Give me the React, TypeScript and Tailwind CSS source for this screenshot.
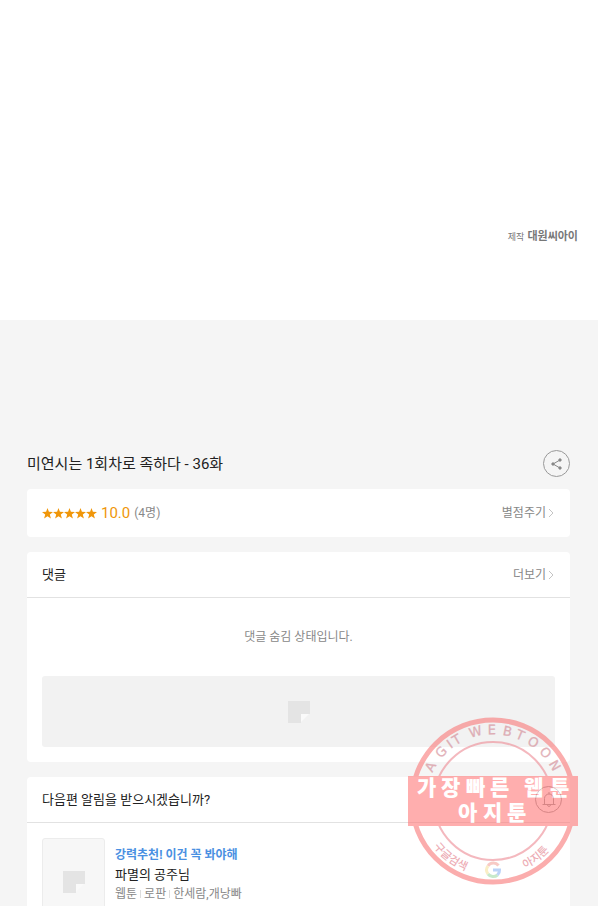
import React from "react";

const ring = (text: string, angles: number[], radius: number) => {
  const x = angles.map((a) => 85 + radius * Math.sin((a * Math.PI) / 180)).join(" ");
  const y = angles.map((a) => 85 - radius * Math.cos((a * Math.PI) / 180)).join(" ");
  return { x, y, rotate: angles.map((a) => a + 4).join(" "), children: text };
};

function Chevron() {
  return (
    <svg className="h-3 w-2" viewBox="0 0 8 12" fill="none" stroke="#c4c4c4" aria-hidden="true">
      <path d="M2 2 6 6 2 10" />
    </svg>
  );
}

function Placeholder() {
  return (
    <svg className="size-[22px]" viewBox="0 0 22 22" aria-hidden="true">
      <path d="M0 0h22v13h-9v9H0z" fill="#e4e4e4" />
      <path d="M13 13h8l-8 8z" fill="#fafafa" />
    </svg>
  );
}

function Stars() {
  return (
    <svg className="h-[11px] w-[55px]" viewBox="0 0 55 11" fill="#f09609" role="img" aria-label="★★★★★">
      {[0, 11, 22, 33, 44].map((x) => (
        <path key={x} transform={`translate(${x} 0)`} d="M5.5 0 6.9 3.8 11 4 7.8 6.5 8.9 10.5 5.5 8.2 2.1 10.5 3.2 6.5 0 4 4.1 3.8z" />
      ))}
    </svg>
  );
}

function Seal() {
  return (
    <svg className="pointer-events-none absolute -top-[61px] right-[-8px] h-[170px] w-[170px] opacity-60" viewBox="0 0 170 170">
      <defs>
        <path id="seal-lower" d="M10 85a75 75 0 0 0 150 0" />
      </defs>
      <circle cx="85" cy="85" r="81" fill="none" stroke="#fa7777" strokeWidth="5" />
      <circle cx="85" cy="85" r="59" fill="none" stroke="#ee8a94" strokeWidth="2" />
      <text
        fontSize="13"
        fill="#d07f8c"
        stroke="#d07f8c"
        strokeWidth="0.3"
        className="[font-family:'DejaVu_Sans',sans-serif]"
        {...ring("AGITWEBTOON", [-65, -51, -39, -34, -19.5, -4.5, 8, 19, 30, 43, 56], 67)}
      />
      <g fontSize="11" fill="#e27683" className="font-['Noto_Sans_CJK_KR',sans-serif] font-medium">
        <text>
          <textPath href="#seal-lower" startOffset="49">구글검색</textPath>
        </text>
        <text>
          <textPath href="#seal-lower" startOffset="151">아지툰</textPath>
        </text>
      </g>
      <g fill="none" strokeWidth="3">
        <path d="M90.500 149.500A6.500 6.500 0 0 0 80 150" stroke="#f5a8a0" />
        <path d="M80 150a6.500 6.500 0 0 0 0 8" stroke="#f8e3a0" />
        <path d="M80 158a6.500 6.500 0 0 0 9.500 1" stroke="#a3dba9" />
        <path d="M89.500 159A6.500 6.500 0 0 0 91.500 154H85" stroke="#8fb6f5" />
      </g>
      <path d="M0 60h170v50H0z" fill="#ff7979" />
      <g fontSize="21" fill="#fff" className="font-['Noto_Sans_CJK_KR',sans-serif] font-black">
        <text x="9 33 58 82 106 116 142" y="79">가장빠른 웹툰</text>
        <text x="50 75 99" y="104">아지툰</text>
      </g>
    </svg>
  );
}

export default function App() {
  return (
    <div className="flex h-screen flex-col overflow-hidden bg-[#f5f5f5] font-[Roboto,'Noto_Sans_CJK_KR',sans-serif] text-[#222]">
      <header className="flex h-80 shrink-0 items-center justify-end bg-white px-5">
        <p className="mt-[153px] flex items-center gap-[3px] leading-4 text-[#777]">
          <span className="text-[9px]">제작</span>
          <strong className="text-[11px] font-bold">대원씨아이</strong>
        </p>
      </header>
      <main className="flex flex-col pt-[130px] pr-7 pl-[27px]">
        <div className="mb-3 flex items-center justify-between">
          <h1 className="text-[15px] leading-6">미연시는 1회차로 족하다 - 36화</h1>
          <button aria-label="공유" className="flex size-[27px] items-center justify-center rounded-full border border-[#999]">
            <svg className="size-3" viewBox="0 0 12 12" fill="#888" stroke="#888" aria-hidden="true">
              <path d="M9 2 2 6l7 4" fill="none" />
              <circle cx="9" cy="2" r="1.2" />
              <circle cx="2" cy="6" r="1.2" />
              <circle cx="9" cy="10" r="1.2" />
            </svg>
          </button>
        </div>
        <section className="mb-[15px] flex h-12 items-center justify-between rounded-sm bg-white px-[15px]">
          <div className="flex items-center gap-1">
            <Stars />
            <span className="text-[15px] text-[#f09609]">10.0</span>
            <span className="text-[12px] text-[#888]">(4명)</span>
          </div>
          <button className="flex items-center gap-px text-[12px] text-[#888]">
            별점주기 <Chevron />
          </button>
        </section>
        <section className="mb-[15px] rounded-sm bg-white">
          <div className="flex h-[46px] items-center justify-between border-b border-[#e2e2e2] px-[15px]">
            <h2 className="text-[13px]">댓글</h2>
            <button className="flex items-center gap-px text-[12px] text-[#888]">
              더보기 <Chevron />
            </button>
          </div>
          <div className="px-[15px] pb-[15px]">
            <p className="py-[30px] text-center text-[12px] leading-[18px] text-[#888]">댓글 숨김 상태입니다.</p>
            <div className="flex h-[71px] items-center justify-center rounded-[3px] bg-[#f2f2f2]">
              <Placeholder />
            </div>
          </div>
        </section>
        <section className="relative rounded-sm bg-white">
          <div className="flex h-[46px] items-center justify-between border-b border-[#e2e2e2] px-[15px]">
            <h2 className="text-[13px]">다음편 알림을 받으시겠습니까?</h2>
            <button aria-label="알림" className="-mr-[7px] flex size-[27px] items-center justify-center rounded-full border border-[#999]">
              <svg className="size-4" viewBox="0 0 16 16" fill="none" stroke="#999" aria-hidden="true">
                <path d="M1.500 12.500h13M3.500 12.500v-6a4.500 4.500 0 0 1 9 0v6M8 2V0M6.500 12.500a1.500 2 0 0 0 3 0" />
              </svg>
            </button>
          </div>
          <div className="flex gap-2.5 p-[15px]">
            <div className="flex h-[88px] w-[63px] items-center justify-center rounded-[3px] border border-[#ececec] bg-[#f7f7f7]">
              <Placeholder />
            </div>
            <div className="pt-[7px]">
              <p className="text-[12px] leading-5 font-bold text-[#4a90e2]">강력추천! 이건 꼭 봐야해</p>
              <h3 className="text-[13px] leading-5">파멸의 공주님</h3>
              <p className="flex items-center gap-[3px] text-[12px] leading-[18px] text-[#888]">
                <span>웹툰</span>
                <span className="h-2 w-px bg-[#ddd]" />
                <span>로판</span>
                <span className="h-2 w-px bg-[#ddd]" />
                <span>한세람,개낭빠</span>
              </p>
            </div>
          </div>
          <Seal />
        </section>
      </main>
    </div>
  );
}
